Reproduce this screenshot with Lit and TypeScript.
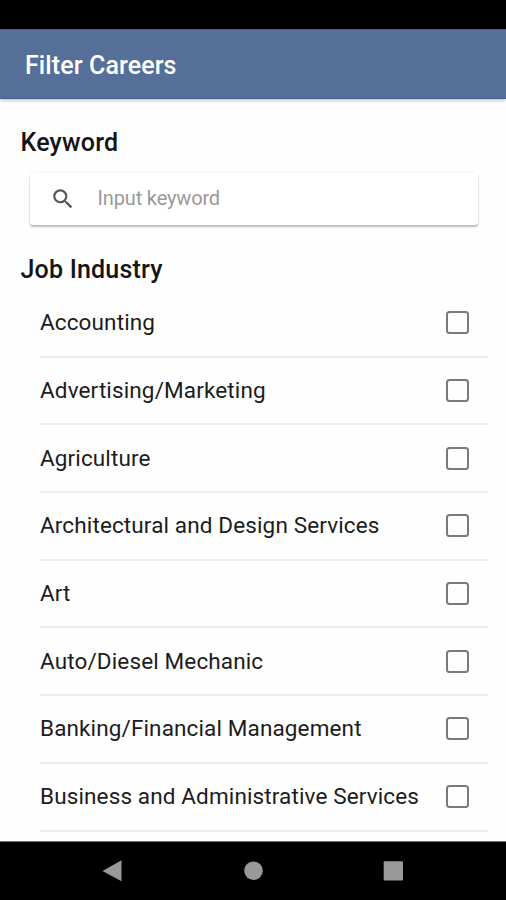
import { LitElement, html, css } from "lit";
import { customElement, state } from "lit/decorators.js";

const INDUSTRIES = [
  "Accounting",
  "Advertising/Marketing",
  "Agriculture",
  "Architectural and Design Services",
  "Art",
  "Auto/Diesel Mechanic",
  "Banking/Financial Management",
  "Business and Administrative Services",
];

@customElement("industry-row")
class IndustryRow extends LitElement {
  static properties = { label: {}, checked: { type: Boolean } };
  declare label: string;
  declare checked: boolean;

  static styles = css`
    :host {
      display: flex;
      align-items: center;
      justify-content: space-between;
      height: 67.7px;
      box-sizing: border-box;
      border-bottom: 2px solid #ececec;
      padding-right: 19.5px;
      cursor: pointer;
    }
    .label {
      font-size: 22.5px;
      line-height: 28px;
      padding-bottom: 1px;
      letter-spacing: 0.13px;
      color: #1c1c1c;
      white-space: nowrap;
    }
    .box {
      box-sizing: border-box;
      width: 23px;
      height: 23px;
      border: 2px solid #7a7a7a;
      border-radius: 3.5px;
    }
    .box.on {
      background: #566f98;
    }
  `;

  render() {
    return html`<span class="label">${this.label}</span>
      <span class="box ${this.checked ? "on" : ""}"></span>`;
  }
}

@customElement("app-root")
class AppRoot extends LitElement {
  @state() private selected = new Set<string>();

  static styles = css`
    :host {
      display: flex;
      flex-direction: column;
      width: 506px;
      height: 900px;
      overflow: hidden;
      background: #fefefe;
      font-family: Roboto, "Noto Sans", sans-serif;
    }
    .status {
      flex: none;
      height: 29px;
      background: #000;
    }
    .toolbar {
      flex: none;
      box-sizing: border-box;
      height: 70px;
      padding: 3px 25px 0;
      display: flex;
      align-items: center;
      background: #566f98;
      border-top: 1px solid #3f5d8b;
      border-bottom: 1px solid #416090;
      box-shadow: 0 2px 3px rgba(0, 0, 0, 0.2);
      color: #fff;
      font-size: 25px;
      letter-spacing: 0.1px;
      font-weight: 500;
    }
    .content {
      flex: 1;
      min-height: 0;
      overflow: hidden;
    }
    h2 {
      margin: 0;
      padding-left: 20.5px;
      font-size: 25px;
      letter-spacing: 0.2px;
      line-height: 30px;
      font-weight: 500;
      color: #141414;
    }
    .keyword {
      padding-top: 29px;
    }
    .industry {
      padding-top: 30px;
    }
    .search {
      display: flex;
      align-items: center;
      height: 52px;
      margin: 15px 28px 0 30px;
      padding-left: 20px;
      border-radius: 3px;
      background: #fff;
      box-shadow: 0 2px 2px rgba(0, 0, 0, 0.25), 0 0 2px rgba(0, 0, 0, 0.1);
    }
    .glass {
      width: 26px;
      height: 26px;
      fill: #555;
    }
    .hint {
      margin: -3px 0 0 21.5px;
      font-size: 20px;
      letter-spacing: -0.15px;
      color: #999;
    }
    .list {
      padding: 5px 18px 0 40px;
    }
    .nav {
      flex: none;
      box-sizing: border-box;
      height: 59px;
      border-top: 1px solid #777;
      background: #000;
    }
    .nav svg {
      display: block;
      fill: #999;
    }
  `;

  private toggle(name: string) {
    const next = new Set(this.selected);
    next.has(name) ? next.delete(name) : next.add(name);
    this.selected = next;
  }

  render() {
    return html`
      <div class="status"></div>
      <header class="toolbar">Filter Careers</header>
      <main class="content">
        <h2 class="keyword">Keyword</h2>
        <div class="search">
          <svg class="glass" viewBox="0 0 24 24">
            <path
              d="M15.5 14h-.79l-.28-.27A6.471 6.471 0 0 0 16 9.5 6.5 6.5 0 1 0 9.5 16c1.61 0 3.09-.59 4.23-1.57l.27.28v.79l5 4.99L20.49 19l-4.99-5zm-6 0C7.01 14 5 11.99 5 9.5S7.01 5 9.5 5 14 7.01 14 9.5 11.99 14 9.5 14z"
            />
          </svg>
          <span class="hint">Input keyword</span>
        </div>
        <h2 class="industry">Job Industry</h2>
        <div class="list">
          ${INDUSTRIES.map(
            (name) => html`<industry-row
              .label=${name}
              .checked=${this.selected.has(name)}
              @click=${() => this.toggle(name)}
            ></industry-row>`
          )}
        </div>
      </main>
      <nav class="nav">
        <svg width="506" height="58" viewBox="0 0 506 58">
          <path d="M102.5 29 121.5 18.2v21.1z" />
          <circle cx="253.5" cy="28.7" r="9.3" />
          <rect x="383.7" y="19.3" width="19.3" height="19.3" rx="1" />
        </svg>
      </nav>
    `;
  }
}
